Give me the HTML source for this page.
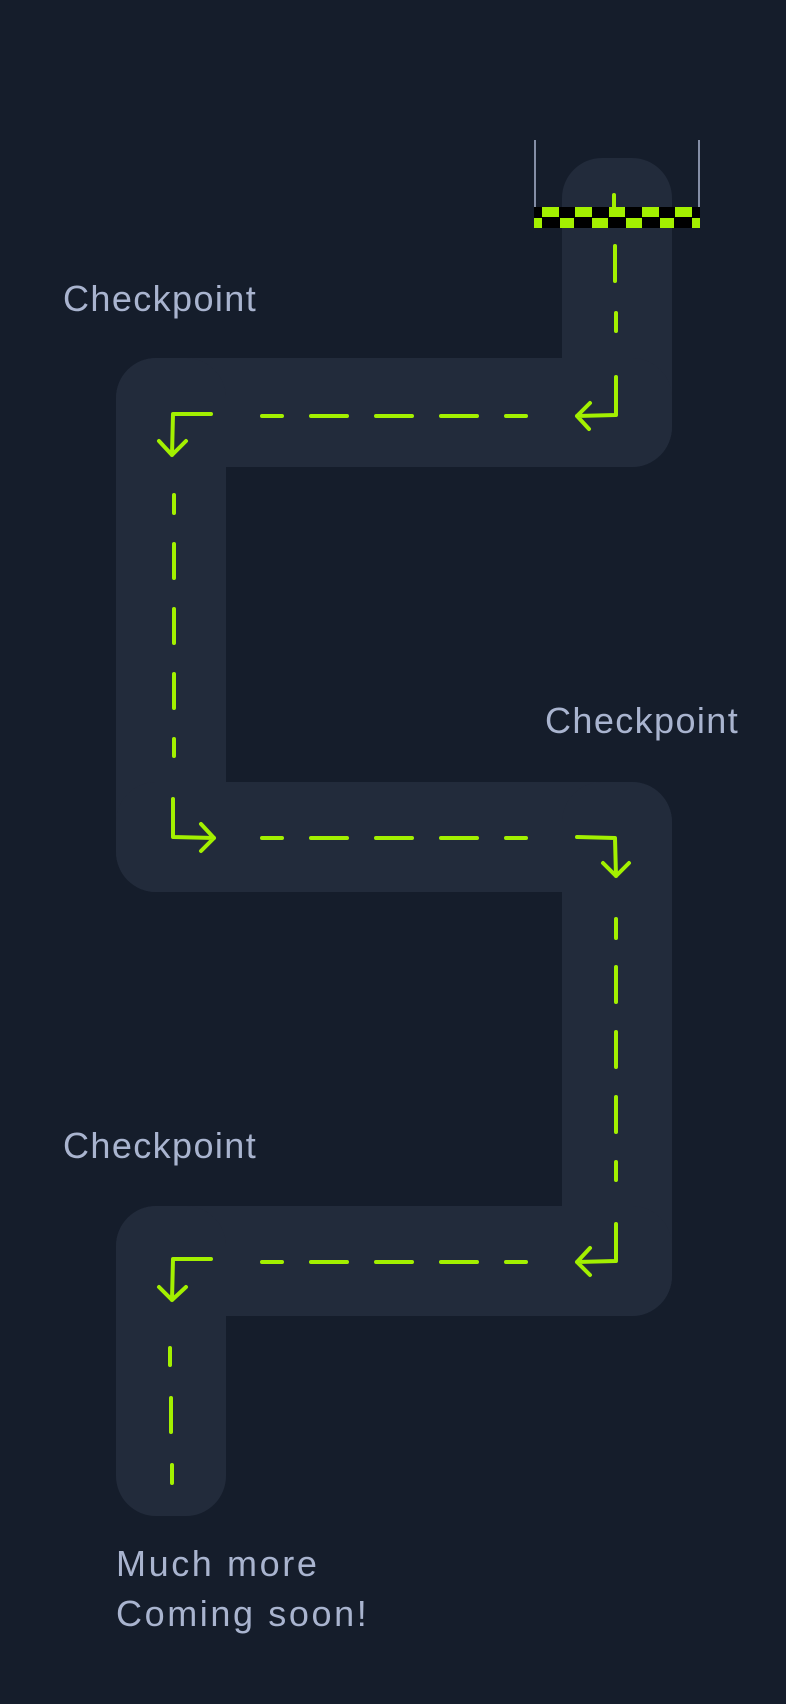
<!DOCTYPE html>
<html><head><meta charset="utf-8"><style>
html,body{margin:0;padding:0;background:#151d2b;}
body{width:786px;height:1704px;position:relative;overflow:hidden;}
svg{position:absolute;left:0;top:0;}
.t{position:absolute;font-family:"Liberation Sans",sans-serif;font-size:36px;color:#a9b4cf;white-space:nowrap;line-height:1;}
</style></head><body>
<svg width="786" height="1704" viewBox="0 0 786 1704">
<g fill="#222b3b">
<rect x="562" y="158" width="110" height="309" rx="40"/>
<rect x="116" y="358" width="556" height="109" rx="40"/>
<rect x="116" y="358" width="110" height="534" rx="40"/>
<rect x="116" y="782" width="556" height="110" rx="40"/>
<rect x="562" y="782" width="110" height="534" rx="40"/>
<rect x="116" y="1206" width="556" height="110" rx="40"/>
<rect x="116" y="1206" width="110" height="310" rx="40"/>
</g>
<g stroke="#a9b4cf" stroke-width="1.5">
<line x1="535" y1="140" x2="535" y2="208"/>
<line x1="699" y1="140" x2="699" y2="208"/>
</g>
<rect x="534" y="207" width="166" height="21" fill="#000"/>
<g fill="#a3f000">
<rect x="542" y="207" width="17" height="10"/>
<rect x="575" y="207" width="17" height="10"/>
<rect x="609" y="207" width="16" height="10"/>
<rect x="642" y="207" width="17" height="10"/>
<rect x="675" y="207" width="17" height="10"/>
<rect x="534" y="218" width="8" height="10"/>
<rect x="560" y="218" width="14" height="10"/>
<rect x="592" y="218" width="16" height="10"/>
<rect x="626" y="218" width="16" height="10"/>
<rect x="660" y="218" width="14" height="10"/>
<rect x="692" y="218" width="8" height="10"/>
</g>
<g stroke="#a3f000" stroke-width="4" stroke-linecap="round" stroke-linejoin="round" fill="none">
<line x1="614" y1="195" x2="614" y2="207"/>
<line x1="615" y1="246" x2="615" y2="281"/>
<line x1="616" y1="313" x2="616" y2="331"/>
<path d="M616 377 V415 L577 416 M590 403 L577 416 L589 429"/>
<path d="M262 416 H282 M311 416 H347 M376 416 H412 M441 416 H477 M506 416 H526"/>
<path d="M211 414 H173 L172 455 M159 441 L172 455 L186 441"/>
<path d="M174 495 V513 M174 544 V578 M174 609 V643 M174 674 V708 M174 739 V756"/>
<path d="M173 799 V837 L214 838 M201 824 L214 838 L201 851"/>
<path d="M262 838 H282 M311 838 H347 M376 838 H412 M441 838 H477 M506 838 H526"/>
<path d="M577 837 L615 838 L616 876 M603 863 L616 876 L629 863"/>
<path d="M616 919 V938 M616 967 V1002 M616 1032 V1067 M616 1097 V1132 M616 1162 V1180"/>
<path d="M616 1224 V1261 L577 1262 M590 1248 L577 1262 L590 1275"/>
<path d="M262 1262 H282 M311 1262 H347 M376 1262 H412 M441 1262 H477 M506 1262 H526"/>
<path d="M211 1259 H173 L172 1300 M159 1287 L172 1300 L186 1287"/>
<path d="M170 1348 V1365 M171 1398 V1432 M172 1465 V1483"/>
</g>
</svg>
<div class="t" style="left:63px;top:281px;letter-spacing:1.4px;">Checkpoint</div>
<div class="t" style="left:545px;top:703px;letter-spacing:1.4px;">Checkpoint</div>
<div class="t" style="left:63px;top:1128px;letter-spacing:1.4px;">Checkpoint</div>
<div class="t" style="left:116px;top:1546px;letter-spacing:2.6px;">Much more</div>
<div class="t" style="left:116px;top:1596px;letter-spacing:2.6px;">Coming soon!</div>
</body></html>
